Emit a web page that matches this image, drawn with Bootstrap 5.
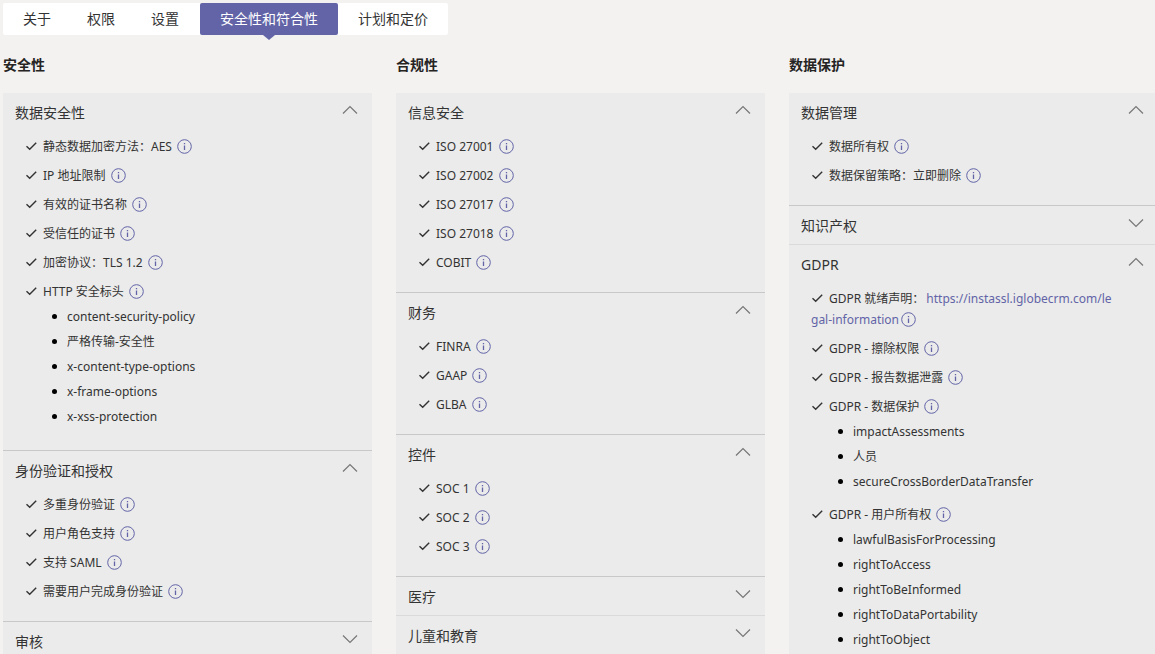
<!DOCTYPE html>
<html lang="zh-CN">
<head>
<meta charset="utf-8">
<meta name="viewport" content="width=device-width, initial-scale=1">
<title>安全性和符合性</title>
<link href="https://cdn.jsdelivr.net/npm/bootstrap@5.3.0/dist/css/bootstrap.min.css" rel="stylesheet">
<style>
:root { --brand: #6264a7; --ink: #333; --page: #f3f2f1; --panel: #ebebeb; }
body { background: var(--page); color: var(--ink); font-family: "Noto Sans", "Noto Sans CJK SC", sans-serif; font-size: 12px; line-height: 21px; overflow-x: hidden; }
.page { padding: 3px 0 0 3px; }
.tabs { background: #fff; padding-left: 2px; border-radius: 2px; font-size: 14px; }
.tabs .nav-link { height: 32px; padding: 0 18px; line-height: 30px; font-size: 14px; color: var(--ink); background: none; border: 0; border-radius: 2px; }
.tabs .nav-link.tab-wide { padding: 0 20px; }
.tabs .nav-link.active { position: relative; margin-left: 3px; background: var(--brand); color: #fff; }
.tabs .nav-link.active::after { content: ""; position: absolute; top: 100%; left: 50%; margin-left: -6px; border: solid transparent; border-width: 5px 6px 0; border-top-color: var(--brand); }
.columns { margin-right: -15px; }
.col-title { font-size: 14px; font-weight: 700; line-height: 20px; margin: 20px 0 18px; color: #252423; }
.panel { background: var(--panel); }
.panel section + section { border-top: 1px solid #c8c8c8; }
.panel .closed + section { border-top-color: #dadada; }
.panel-head { height: 38px; padding: 2px 14px 0 12px; font-size: 14px; font-weight: 400; line-height: 20px; color: var(--ink); background: none; border: 0; }
.panel-head .chevron { width: 16px; height: 10px; margin-bottom: 6px; }
.panel-head.collapsed .chevron { transform: rotate(180deg); }
.checks { padding: 1px 44px 15px 22px; margin: 0; list-style: none; }
.checks > li { padding: 4px 0; }
.tick { width: 18px; height: 12px; vertical-align: -1px; }
.info { border: 0; padding: 0; margin-left: 2px; background: none; line-height: 15px; vertical-align: -3px; }
.info svg { width: 15px; height: 15px; display: block; }
.subs { margin: -2px 0 2px; padding: 0 0 0 42px; list-style: none; line-height: 25px; }
.subs li::before { content: ""; display: inline-block; width: 5px; height: 5px; margin: 0 10px 3px -15px; border-radius: 50%; background: #000; vertical-align: middle; }
.checks a { margin-left: 2px; color: var(--brand); text-decoration: none; word-break: break-all; }
</style>
</head>
<body>
<svg class="d-none" aria-hidden="true">
  <symbol id="tick" viewBox="0 0 18 12"><path d="M1.5 6.2 4.7 9.3 11.2 2.7" fill="none" stroke="#333" stroke-width="1.4"/></symbol>
  <symbol id="info" viewBox="0 0 15 15"><circle cx="7.5" cy="7.5" r="6.8" fill="none" stroke="#6264a7"/><path d="M7.5 6.5V11M7.5 4V5.3" stroke="#6264a7" stroke-width="1.3"/></symbol>
  <symbol id="chevron" viewBox="0 0 16 10"><path d="M1 8.5 8 1.5 15 8.5" fill="none" stroke="#777" stroke-width="1.2"/></symbol>
</svg>
<main class="page">
  <nav class="nav tabs d-inline-flex align-top" aria-label="应用详情">
    <button type="button" class="nav-link">关于</button>
    <button type="button" class="nav-link">权限</button>
    <button type="button" class="nav-link">设置</button>
    <button type="button" class="nav-link tab-wide active" aria-current="page">安全性和符合性</button>
    <button type="button" class="nav-link tab-wide">计划和定价</button>
  </nav>
  <div class="row gx-4 columns">
    <div class="col-4">
      <h2 class="col-title">安全性</h2>
      <div class="panel">
        <section>
          <button type="button" class="panel-head d-flex w-100 justify-content-between align-items-center" data-bs-toggle="collapse" data-bs-target="#p1" aria-expanded="true">数据安全性<svg class="chevron"><use href="#chevron"/></svg></button>
          <ul id="p1" class="checks collapse show">
            <li><svg class="tick"><use href="#tick"/></svg>静态数据加密方法：AES <button type="button" class="info" aria-label="详细信息"><svg><use href="#info"/></svg></button></li>
            <li><svg class="tick"><use href="#tick"/></svg>IP 地址限制 <button type="button" class="info" aria-label="详细信息"><svg><use href="#info"/></svg></button></li>
            <li><svg class="tick"><use href="#tick"/></svg>有效的证书名称 <button type="button" class="info" aria-label="详细信息"><svg><use href="#info"/></svg></button></li>
            <li><svg class="tick"><use href="#tick"/></svg>受信任的证书 <button type="button" class="info" aria-label="详细信息"><svg><use href="#info"/></svg></button></li>
            <li><svg class="tick"><use href="#tick"/></svg>加密协议：TLS 1.2 <button type="button" class="info" aria-label="详细信息"><svg><use href="#info"/></svg></button></li>
            <li><svg class="tick"><use href="#tick"/></svg>HTTP 安全标头 <button type="button" class="info" aria-label="详细信息"><svg><use href="#info"/></svg></button></li>
            <li class="pt-0"><ul class="subs">
              <li>content-security-policy</li>
              <li>严格传输-安全性</li>
              <li>x-content-type-options</li>
              <li>x-frame-options</li>
              <li>x-xss-protection</li>
            </ul></li>
          </ul>
        </section>
        <section>
          <button type="button" class="panel-head d-flex w-100 justify-content-between align-items-center" data-bs-toggle="collapse" data-bs-target="#p2" aria-expanded="true">身份验证和授权<svg class="chevron"><use href="#chevron"/></svg></button>
          <ul id="p2" class="checks collapse show">
            <li><svg class="tick"><use href="#tick"/></svg>多重身份验证 <button type="button" class="info" aria-label="详细信息"><svg><use href="#info"/></svg></button></li>
            <li><svg class="tick"><use href="#tick"/></svg>用户角色支持 <button type="button" class="info" aria-label="详细信息"><svg><use href="#info"/></svg></button></li>
            <li><svg class="tick"><use href="#tick"/></svg>支持 SAML <button type="button" class="info" aria-label="详细信息"><svg><use href="#info"/></svg></button></li>
            <li><svg class="tick"><use href="#tick"/></svg>需要用户完成身份验证 <button type="button" class="info" aria-label="详细信息"><svg><use href="#info"/></svg></button></li>
          </ul>
        </section>
        <section class="closed">
          <button type="button" class="panel-head collapsed d-flex w-100 justify-content-between align-items-center" aria-expanded="false">审核<svg class="chevron"><use href="#chevron"/></svg></button>
        </section>
      </div>
    </div>
    <div class="col-4">
      <h2 class="col-title">合规性</h2>
      <div class="panel">
        <section>
          <button type="button" class="panel-head d-flex w-100 justify-content-between align-items-center" data-bs-toggle="collapse" data-bs-target="#p3" aria-expanded="true">信息安全<svg class="chevron"><use href="#chevron"/></svg></button>
          <ul id="p3" class="checks collapse show">
            <li><svg class="tick"><use href="#tick"/></svg>ISO 27001 <button type="button" class="info" aria-label="详细信息"><svg><use href="#info"/></svg></button></li>
            <li><svg class="tick"><use href="#tick"/></svg>ISO 27002 <button type="button" class="info" aria-label="详细信息"><svg><use href="#info"/></svg></button></li>
            <li><svg class="tick"><use href="#tick"/></svg>ISO 27017 <button type="button" class="info" aria-label="详细信息"><svg><use href="#info"/></svg></button></li>
            <li><svg class="tick"><use href="#tick"/></svg>ISO 27018 <button type="button" class="info" aria-label="详细信息"><svg><use href="#info"/></svg></button></li>
            <li><svg class="tick"><use href="#tick"/></svg>COBIT <button type="button" class="info" aria-label="详细信息"><svg><use href="#info"/></svg></button></li>
          </ul>
        </section>
        <section>
          <button type="button" class="panel-head d-flex w-100 justify-content-between align-items-center" data-bs-toggle="collapse" data-bs-target="#p4" aria-expanded="true">财务<svg class="chevron"><use href="#chevron"/></svg></button>
          <ul id="p4" class="checks collapse show">
            <li><svg class="tick"><use href="#tick"/></svg>FINRA <button type="button" class="info" aria-label="详细信息"><svg><use href="#info"/></svg></button></li>
            <li><svg class="tick"><use href="#tick"/></svg>GAAP <button type="button" class="info" aria-label="详细信息"><svg><use href="#info"/></svg></button></li>
            <li><svg class="tick"><use href="#tick"/></svg>GLBA <button type="button" class="info" aria-label="详细信息"><svg><use href="#info"/></svg></button></li>
          </ul>
        </section>
        <section>
          <button type="button" class="panel-head d-flex w-100 justify-content-between align-items-center" data-bs-toggle="collapse" data-bs-target="#p5" aria-expanded="true">控件<svg class="chevron"><use href="#chevron"/></svg></button>
          <ul id="p5" class="checks collapse show">
            <li><svg class="tick"><use href="#tick"/></svg>SOC 1 <button type="button" class="info" aria-label="详细信息"><svg><use href="#info"/></svg></button></li>
            <li><svg class="tick"><use href="#tick"/></svg>SOC 2 <button type="button" class="info" aria-label="详细信息"><svg><use href="#info"/></svg></button></li>
            <li><svg class="tick"><use href="#tick"/></svg>SOC 3 <button type="button" class="info" aria-label="详细信息"><svg><use href="#info"/></svg></button></li>
          </ul>
        </section>
        <section class="closed">
          <button type="button" class="panel-head collapsed d-flex w-100 justify-content-between align-items-center" aria-expanded="false">医疗<svg class="chevron"><use href="#chevron"/></svg></button>
        </section>
        <section class="closed">
          <button type="button" class="panel-head collapsed d-flex w-100 justify-content-between align-items-center" aria-expanded="false">儿童和教育<svg class="chevron"><use href="#chevron"/></svg></button>
        </section>
      </div>
    </div>
    <div class="col-4">
      <h2 class="col-title">数据保护</h2>
      <div class="panel">
        <section>
          <button type="button" class="panel-head d-flex w-100 justify-content-between align-items-center" data-bs-toggle="collapse" data-bs-target="#p6" aria-expanded="true">数据管理<svg class="chevron"><use href="#chevron"/></svg></button>
          <ul id="p6" class="checks collapse show">
            <li><svg class="tick"><use href="#tick"/></svg>数据所有权 <button type="button" class="info" aria-label="详细信息"><svg><use href="#info"/></svg></button></li>
            <li><svg class="tick"><use href="#tick"/></svg>数据保留策略：立即删除 <button type="button" class="info" aria-label="详细信息"><svg><use href="#info"/></svg></button></li>
          </ul>
        </section>
        <section class="closed">
          <button type="button" class="panel-head collapsed d-flex w-100 justify-content-between align-items-center" aria-expanded="false">知识产权<svg class="chevron"><use href="#chevron"/></svg></button>
        </section>
        <section>
          <button type="button" class="panel-head d-flex w-100 justify-content-between align-items-center" data-bs-toggle="collapse" data-bs-target="#p7" aria-expanded="true">GDPR<svg class="chevron"><use href="#chevron"/></svg></button>
          <ul id="p7" class="checks collapse show">
            <li><svg class="tick"><use href="#tick"/></svg>GDPR 就绪声明：<a href="https://instassl.iglobecrm.com/legal-information">https://instassl.iglobecrm.com/legal-information</a><button type="button" class="info" aria-label="详细信息"><svg><use href="#info"/></svg></button></li>
            <li><svg class="tick"><use href="#tick"/></svg>GDPR - 擦除权限 <button type="button" class="info" aria-label="详细信息"><svg><use href="#info"/></svg></button></li>
            <li><svg class="tick"><use href="#tick"/></svg>GDPR - 报告数据泄露 <button type="button" class="info" aria-label="详细信息"><svg><use href="#info"/></svg></button></li>
            <li><svg class="tick"><use href="#tick"/></svg>GDPR - 数据保护 <button type="button" class="info" aria-label="详细信息"><svg><use href="#info"/></svg></button></li>
            <li class="pt-0"><ul class="subs">
              <li>impactAssessments</li>
              <li>人员</li>
              <li>secureCrossBorderDataTransfer</li>
            </ul></li>
            <li><svg class="tick"><use href="#tick"/></svg>GDPR - 用户所有权 <button type="button" class="info" aria-label="详细信息"><svg><use href="#info"/></svg></button></li>
            <li class="pt-0"><ul class="subs">
              <li>lawfulBasisForProcessing</li>
              <li>rightToAccess</li>
              <li>rightToBeInformed</li>
              <li>rightToDataPortability</li>
              <li>rightToObject</li>
            </ul></li>
          </ul>
        </section>
      </div>
    </div>
  </div>
</main>
<script src="https://cdn.jsdelivr.net/npm/bootstrap@5.3.0/dist/js/bootstrap.bundle.min.js"></script>
</body>
</html>
